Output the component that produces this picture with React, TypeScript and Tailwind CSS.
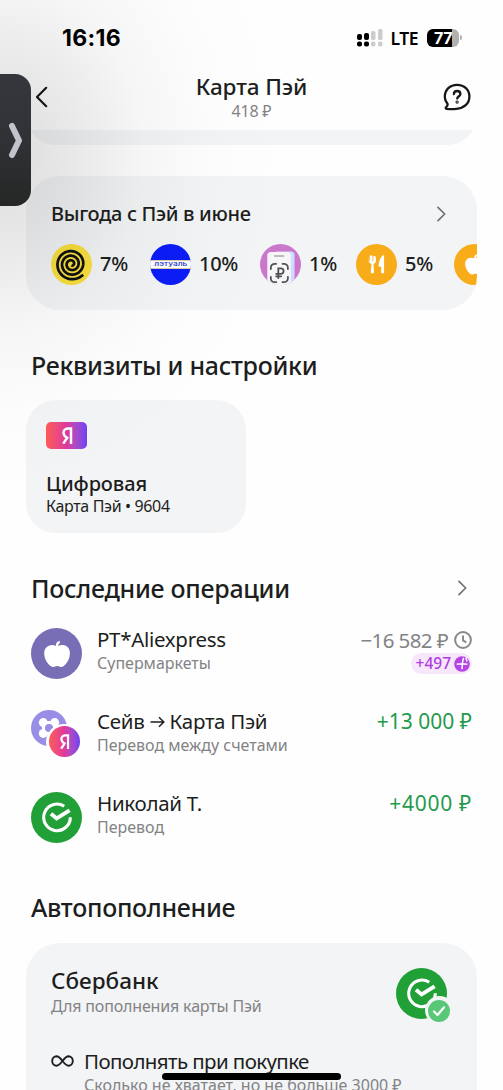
import type { ReactNode } from "react";

function ChevronRight() {
  return (
    <svg className="h-4 w-[9px] shrink-0" viewBox="0 0 9 16" fill="none" stroke="#6f7276" strokeWidth="1.7" strokeLinecap="round" strokeLinejoin="round">
      <path d="M1 1.4 7.7 8 1 14.6" />
    </svg>
  );
}

function Apple({ className }: { className: string }) {
  return (
    <svg className={className} viewBox="0 0 27 28" fill="#fff">
      <path d="M12.400 5.700C12.300 2.600 13.600 1 16.200.2L16.500 2.600C15.300 3.200 14.800 4.200 14.600 5.600c1.400-.8 3.200-1.100 5.100-.9 4.300.4 7.200 3.600 7.200 8.300 0 5.600-2.700 10.500-6.300 13.400-1.500 1.200-3.300 1.200-4.600.7-1.500-.7-3.100-.7-4.600 0-1.300.5-3.100.5-4.600-.7C3.200 23.500.2 18.600.2 13.100c0-4.700 2.900-7.900 7.200-8.300 1.900-.2 3.600 0 5 .9z" />
    </svg>
  );
}

function SberLogo() {
  return (
    <svg className="size-[51px] shrink-0" viewBox="0 0 51 51" fill="none">
      <circle cx="25.500" cy="25.500" r="25.500" fill="#21a038" />
      <path d="M33.200 14.200A13.300 13.300 0 1 0 39.300 25.200" stroke="#fff" strokeWidth="3.100" />
      <path d="M20 21.800 25.600 26.400 38.600 18.300" stroke="#fff" strokeWidth="3.900" />
    </svg>
  );
}

function Ya({ className }: { className: string }) {
  return (
    <svg className={className} viewBox="0 0 12 17" fill="none" stroke="#fff" strokeWidth="2.500">
      <path d="M10 17V1.500H7.400C4.400 1.500 2.500 3.200 2.500 5.800c0 2.200 1.200 3.600 3.500 5.200M6.900 9.800 2.200 16.600" />
    </svg>
  );
}

function SaveToPay() {
  return (
    <div className="relative size-[51px] shrink-0">
      <svg className="size-9" viewBox="0 0 36 36">
        <circle cx="18" cy="18" r="18" fill="#998ee6" />
        <g fill="#fff">
          <circle cx="12.300" cy="12.600" r="4.500" />
          <circle cx="23.700" cy="12.600" r="4.500" />
          <circle cx="12.300" cy="23.400" r="4.500" />
          <circle cx="23.700" cy="23.400" r="4.500" />
          <rect x="11" y="11" width="14" height="14" />
        </g>
        <circle cx="18" cy="18" r="4" fill="#998ee6" />
      </svg>
      <div className="absolute top-[14px] left-[15px] flex size-[36px] items-center justify-center rounded-full bg-[#fefefe]">
        <div className="flex size-[31px] items-center justify-center rounded-full bg-linear-to-r from-[#ff5a52] via-[#df389c] to-[#6f3df5]">
          <Ya className="h-[15px] w-[11px]" />
        </div>
      </div>
    </div>
  );
}

const spiralPath = Array.from({ length: 160 }, (_, i) => {
  const turn = (i / 159) * 3.150;
  const radius = 15.800 - 4.600 * turn;
  const angle = 0.740 + turn * Math.PI * 2;
  const x = 20.500 + radius * Math.cos(angle);
  const y = 20 + radius * Math.sin(angle);
  return `${i === 0 ? "M" : "L"}${x.toFixed(2)} ${y.toFixed(2)}`;
}).join("");

function Spiral() {
  return (
    <svg className="size-[41px]" viewBox="0 0 41 41">
      <circle cx="20.500" cy="20.500" r="20.500" fill="#f9e03e" />
      <path d={spiralPath} fill="none" stroke="#111" strokeWidth="2.700" strokeLinejoin="round" />
    </svg>
  );
}

function Letual() {
  return (
    <div className="flex size-[41px] items-center overflow-hidden rounded-full bg-[#0b1cf8]">
      <div className="flex h-[9px] w-full items-center justify-center border-y border-[#d8cba8] bg-white">
        <span className="scale-x-[1.4] font-['Inter'] text-[6px] leading-[6px] font-medium text-[#1c35cf]">лэтуаль</span>
      </div>
    </div>
  );
}

function ScanPay() {
  return (
    <svg className="size-[41px]" viewBox="0 0 41 41">
      <defs>
        <clipPath id="scan-circle"><circle cx="20.500" cy="20.500" r="20.500" /></clipPath>
        <linearGradient id="phone-side" x1="0" y1="0" x2="1" y2="1">
          <stop offset="0" stopColor="#efc8fa" />
          <stop offset=".5" stopColor="#c8e2ff" />
          <stop offset="1" stopColor="#ddd0ff" />
        </linearGradient>
      </defs>
      <g clipPath="url(#scan-circle)">
        <rect width="41" height="41" fill="#cb78cc" />
        <rect x="14" y="7.500" width="20.500" height="36" rx="3.500" fill="url(#phone-side)" />
        <rect x="7.300" y="8" width="23.500" height="36" rx="3.500" fill="#f6f5f8" />
        <rect x="13.800" y="11" width="10.500" height="2" rx="1" fill="#bcbcc0" />
        <g fill="none" stroke="#505156" strokeWidth="1.800" strokeLinecap="round">
          <path d="M10.800 25v-1.200a4 4 0 0 1 4-4h1.400M22.500 19.800h1.400a4 4 0 0 1 4 4V25M27.900 33v1.200a4 4 0 0 1-4 4h-1.400M16.200 38.200h-1.400a4 4 0 0 1-4-4V33" />
          <path d="M18.300 34v-9.700h2.500a2.800 2.800 0 0 1 0 5.600h-4.600M16.200 32.300h5" />
        </g>
      </g>
    </svg>
  );
}

function Food() {
  return (
    <svg className="size-[41px]" viewBox="0 0 41 41">
      <circle cx="20.500" cy="20.500" r="20.500" fill="#f8ac19" />
      <g fill="#fff">
        <path d="M12.200 11.900c.7 0 1 .4 1 1v4c0 .5.800.5.800 0v-4.400c0-.8.500-1.200 1.200-1.200.9 0 1.300.4 1.300 1.200v4.400c0 .5.800.5.800 0v-4c0-.6.400-1 1-1 .7 0 1.300.5 1.400 1.200l.4 3c.2 2-.7 3.200-2.600 3.800l.5 7.700c.1 1.200-.5 1.900-1.600 1.900s-1.700-.7-1.600-1.900l.6-7.700c-2-.6-3-1.800-2.700-3.800l.3-3c.1-.7.600-1.200 1.200-1.200z" />
        <path d="M26.600 11.500c.8-.7 1.500-.3 1.500.8v15.500c0 1.100-.5 1.700-1.500 1.700s-1.600-.6-1.500-1.700l.2-5.100h-1.600c-.8 0-1.200-.4-1.100-1.200.3-4.500 1.800-7.900 4-10z" />
      </g>
    </svg>
  );
}

function Cashback({ icon, value, className }: { icon: ReactNode; value: string; className: string }) {
  return (
    <div className={`flex shrink-0 items-center gap-2 ${className}`}>
      <div className="size-[41px] shrink-0">{icon}</div>
      <span className="text-[20px] font-medium tracking-[-0.3px]">{value}</span>
    </div>
  );
}

function Operation({ icon, title, note, children }: { icon: ReactNode; title: ReactNode; note: ReactNode; children: ReactNode }) {
  return (
    <div className="flex h-[81.750px] items-start pr-[31px] pl-[31px] whitespace-nowrap">
      {icon}
      <div className="ml-[15px] flex-1">
        <div className="h-6 text-[20.500px] leading-[22px] tracking-[-0.3px]">{title}</div>
        <div className="h-[23px] text-[16px] leading-[23px] text-[#828385]">{note}</div>
      </div>
      <div className="flex flex-col items-end text-[21px] leading-[23px]">{children}</div>
    </div>
  );
}

function StatusBar() {
  return (
    <div className="flex h-[60px] items-center pt-[15px] pr-[41px] pl-[62px] font-['Inter'] text-black">
      <span className="pt-px text-[23px] leading-[45px] font-bold tracking-[0.3px]">16:16</span>
      <svg className="ml-auto h-[18px] w-[26px]" viewBox="0 0 26 18">
        <g fill="#000">
          <rect x="0" y="5" width="5" height="6" rx="2" /><rect x="0" y="12.500" width="5" height="5" rx="2" />
          <rect x="7" y="4" width="5" height="7" rx="2" /><rect x="7" y="12.500" width="5" height="5" rx="2" />
        </g>
        <g fill="#ccc">
          <rect x="14" y="2" width="4.500" height="9" rx="1.500" /><rect x="14" y="12.500" width="4.500" height="5" rx="2" />
          <rect x="21" y="0" width="4.500" height="11" rx="1.500" /><rect x="21" y="12.500" width="4.500" height="5" rx="2" />
        </g>
      </svg>
      <span className="ml-[8px] font-['Noto_Sans'] text-[17.500px] leading-5 font-semibold tracking-[-0.5px]">LTE</span>
      <div className="ml-[9px] flex h-[18px] w-[32px] items-center justify-center rounded-[6px] bg-linear-to-r from-black from-78% to-[#b0b0b0] to-78%">
        <span className="text-[16px] leading-[18px] font-bold tracking-[-0.5px] text-white">77</span>
      </div>
      <div className="ml-[1px] h-[5px] w-[2px] rounded-r-full bg-[#b0b0b0]" />
    </div>
  );
}

export default function App() {
  return (
    <div className="relative flex h-[1090px] w-[503px] flex-col overflow-hidden bg-[#fefefe] font-['Noto_Sans','Open_Sans',sans-serif] text-[#1d1e20] *:shrink-0">
      <StatusBar />
      <header className="flex h-[70px] items-start pr-[32px] pl-[35px]">
        <svg className="mt-[26px] h-[22px] w-[13px]" viewBox="0 0 13 22" fill="none" stroke="#161719" strokeWidth="2.200" strokeLinecap="round" strokeLinejoin="round">
          <path d="M11.200 1.800 2 11l9.200 9.200" />
        </svg>
        <div className="flex-1 pt-[13px] pl-[12px] text-center">
          <div className="mb-[2px] text-[22.500px] leading-[27px] font-medium tracking-[-0.1px]">Карта Пэй</div>
          <div className="text-[16px] leading-[18px] tracking-[-0.2px] text-[#828385]">418 ₽</div>
        </div>
        <svg className="mt-[23px] h-[28px] w-[28px]" viewBox="0 0 28 28" fill="none" stroke="#161719" strokeWidth="2.300" strokeLinecap="round" strokeLinejoin="round">
          <path d="M14.200 1.800c7 0 12.200 4.800 12.200 11.600 0 7.300-5.600 12-13 12.500-3.500.3-7.200.2-9.800 0-1-.1-1.200-.7-.6-1.400 1.300-1.500 2-2.700 1.500-3.800C2.800 18.700 1.800 16.400 1.800 13.800 1.800 6.800 7 1.800 14.200 1.800z" />
          <path d="M10.900 11c.1-1.900 1.400-3 3.200-3 1.900 0 3.300 1.200 3.300 2.900 0 2.500-3.200 2.600-3.200 4.700" />
          <circle cx="14.100" cy="19.100" r=".5" />
        </svg>
      </header>

      <div className="mx-[26px] h-[15px] overflow-hidden">
        <div className="-mt-[45px] h-[60px] rounded-[32px] bg-[#f3f4f6]" />
      </div>

      <section className="mx-[26px] mt-[31px] h-[134px] overflow-hidden rounded-[34px] bg-[#f3f4f6] pl-[25px]">
        <div className="flex h-[67.500px] items-start justify-between pt-[24px] pr-[31px]">
          <h2 className="text-[20px] leading-7 font-medium tracking-[-0.330px]">Выгода с Пэй в июне</h2>
          <div className="pt-[6px]"><ChevronRight /></div>
        </div>
        <div className="flex">
          <Cashback className="w-[99px]" icon={<Spiral />} value="7%" />
          <Cashback className="w-[110px]" icon={<Letual />} value="10%" />
          <Cashback className="w-[96px]" icon={<ScanPay />} value="1%" />
          <Cashback className="w-[98px]" icon={<Food />} value="5%" />
          <div className="flex size-[41px] shrink-0 items-center justify-center rounded-full bg-[#f8ac19]">
            <Apple className="h-[21px] w-[20px]" />
          </div>
        </div>
      </section>

      <h2 className="mt-[38px] mb-px ml-[31px] text-[25px] leading-[34px] font-medium tracking-[-0.300px]">Реквизиты и настройки</h2>

      <section className="mt-[17px] ml-[26px] h-[133px] w-[220px] rounded-[30px] bg-[#f3f4f6] pt-[22px] pl-5">
        <div className="flex h-[27px] w-[41px] items-center justify-center rounded-[5px] bg-linear-to-r from-[#ff5a52] via-[#df389c] to-[#6f3df5]">
          <Ya className="h-[17px] w-[12px]" />
        </div>
        <div className="mt-[21px] text-[20px] leading-7 font-medium tracking-[-0.1px]">Цифровая</div>
        <div className="text-[16px] leading-[17px] tracking-[-0.350px]">Карта Пэй • 9604</div>
      </section>

      <div className="mt-[38px] flex h-[34px] items-center justify-between pr-[36px] pl-[31px]">
        <h2 className="text-[25px] leading-[32px] font-medium tracking-[-0.280px]">Последние операции</h2>
        <ChevronRight />
      </div>

      <div className="mt-[23px] h-[262px]">
        <Operation
          icon={<div className="flex size-[51px] items-center justify-center rounded-full bg-[#786eb6]"><Apple className="h-[28px] w-[26px]" /></div>}
          title="PT*Aliexpress"
          note="Супермаркеты"
        >
          <div className="flex h-6 items-center gap-[6px] text-[#828385]">
            <span className="text-[20.500px] tracking-[-0.600px]">−16 582 ₽</span>
            <svg className="size-[18px]" viewBox="0 0 18 18" fill="none" stroke="#898989" strokeWidth="2">
              <circle cx="9" cy="9" r="7.900" />
              <path d="M9 4.500v5l3.300 1.800" />
            </svg>
          </div>
          <div className="mt-[1px] flex h-[21px] items-center gap-[3px] rounded-full bg-[#f6e7fb] pr-[2px] pl-[5px]">
            <span className="text-[15.500px] leading-[19px] font-medium text-[#b13de0]">+497</span>
            <svg className="size-4" viewBox="0 0 16 16">
              <circle cx="8" cy="8" r="7.800" fill="#b544e2" />
              <path d="M2.700 8.300c3.500-.6 7.200-.6 10.700-.1M9.600 1.800C8.300 5.500 7.900 9.400 8.100 13.300M11.800 1.500l1.200 4" stroke="#fff" strokeWidth="1.500" fill="none" />
            </svg>
          </div>
        </Operation>
        <Operation
          icon={<SaveToPay />}
          title={
            <span className="flex items-center">
              Сейв
              <svg className="mx-[5px] mt-[2px] h-[12px] w-[15px]" viewBox="0 0 15 12" fill="none" stroke="#1d1e20" strokeWidth="1.500">
                <path d="M.5 6h13M9 1.200 13.800 6 9 10.800" />
              </svg>
              Карта Пэй
            </span>
          }
          note="Перевод между счетами"
        >
          <span className="text-[#249a4d]">+13 000 ₽</span>
        </Operation>
        <Operation icon={<SberLogo />} title="Николай Т." note="Перевод">
          <span className="tracking-[0.700px] text-[#249a4d]">+4000 ₽</span>
        </Operation>
      </div>

      <h2 className="mb-px ml-[31px] text-[25px] leading-[34px] font-medium tracking-[-0.300px]">Автопополнение</h2>

      <section className="mx-[26px] mt-[18px] h-[220px] rounded-[34px] bg-[#f3f4f6] pt-[24px] pl-[25px]">
        <div className="flex h-[83px] justify-between pr-[30px]">
          <div>
            <h3 className="text-[22.500px] leading-7 font-medium">Сбербанк</h3>
            <p className="text-[16px] leading-[23px] tracking-[-0.160px] text-[#828385]">Для пополнения карты Пэй</p>
          </div>
          <div className="relative mt-[1px] h-[51px]">
            <SberLogo />
            <div className="absolute top-[28px] left-[28.500px] flex size-[29px] items-center justify-center rounded-full bg-[#f3f4f6]">
              <svg className="size-[22px]" viewBox="0 0 22 22" fill="none">
                <circle cx="11" cy="11" r="11" fill="#58c777" />
                <path d="M6 11.500 9.500 15 16 7.300" stroke="#fff" strokeWidth="2.200" strokeLinecap="round" strokeLinejoin="round" />
              </svg>
            </div>
          </div>
        </div>
        <div className="flex whitespace-nowrap">
          <svg className="mt-[5px] h-[12px] w-[23px]" viewBox="0 0 23 12" fill="none" stroke="#1d1e20" strokeWidth="1.900">
            <path d="M11.500 6C9.300 3.200 7.800 1.300 5.600 1.300A4.600 4.600 0 0 0 1.200 6a4.600 4.600 0 0 0 4.400 4.700c2.200 0 3.700-1.900 5.900-4.700s3.700-4.700 5.900-4.700A4.600 4.600 0 0 1 21.800 6a4.600 4.600 0 0 1-4.400 4.700c-2.200 0-3.700-1.900-5.900-4.700z" />
          </svg>
          <div className="ml-[10px]">
            <div className="mb-[2px] text-[20.500px] leading-[22px] tracking-[-0.600px]">Пополнять при покупке</div>
            <div className="text-[16px] leading-[22px] text-[#828385]">Сколько не хватает, но не больше 3000 ₽</div>
          </div>
        </div>
      </section>

      <div className="pointer-events-none absolute inset-x-0 top-0 h-[520px] bg-[radial-gradient(ellipse_290px_350px_at_0px_155px,rgba(0,0,0,.135)_0%,rgba(0,0,0,.085)_25%,rgba(0,0,0,.03)_50%,rgba(0,0,0,.008)_75%,transparent_100%)]" />
      <div className="absolute top-[74px] left-0 flex h-[132px] w-[31px] items-center rounded-r-[16px] bg-linear-to-b from-[#34373c] via-[#303236] to-[#252625] pl-[8px]">
        <svg className="h-[37px] w-[15px]" viewBox="0 0 15 37" fill="none" stroke="#c2c3cc" strokeWidth="6" strokeLinecap="round" strokeLinejoin="round">
          <path d="M4 4 11 18.500 4 33" />
        </svg>
      </div>
      <div className="absolute top-[1073px] left-[162px] h-[7px] w-[179px] rounded-full bg-black" />
    </div>
  );
}
